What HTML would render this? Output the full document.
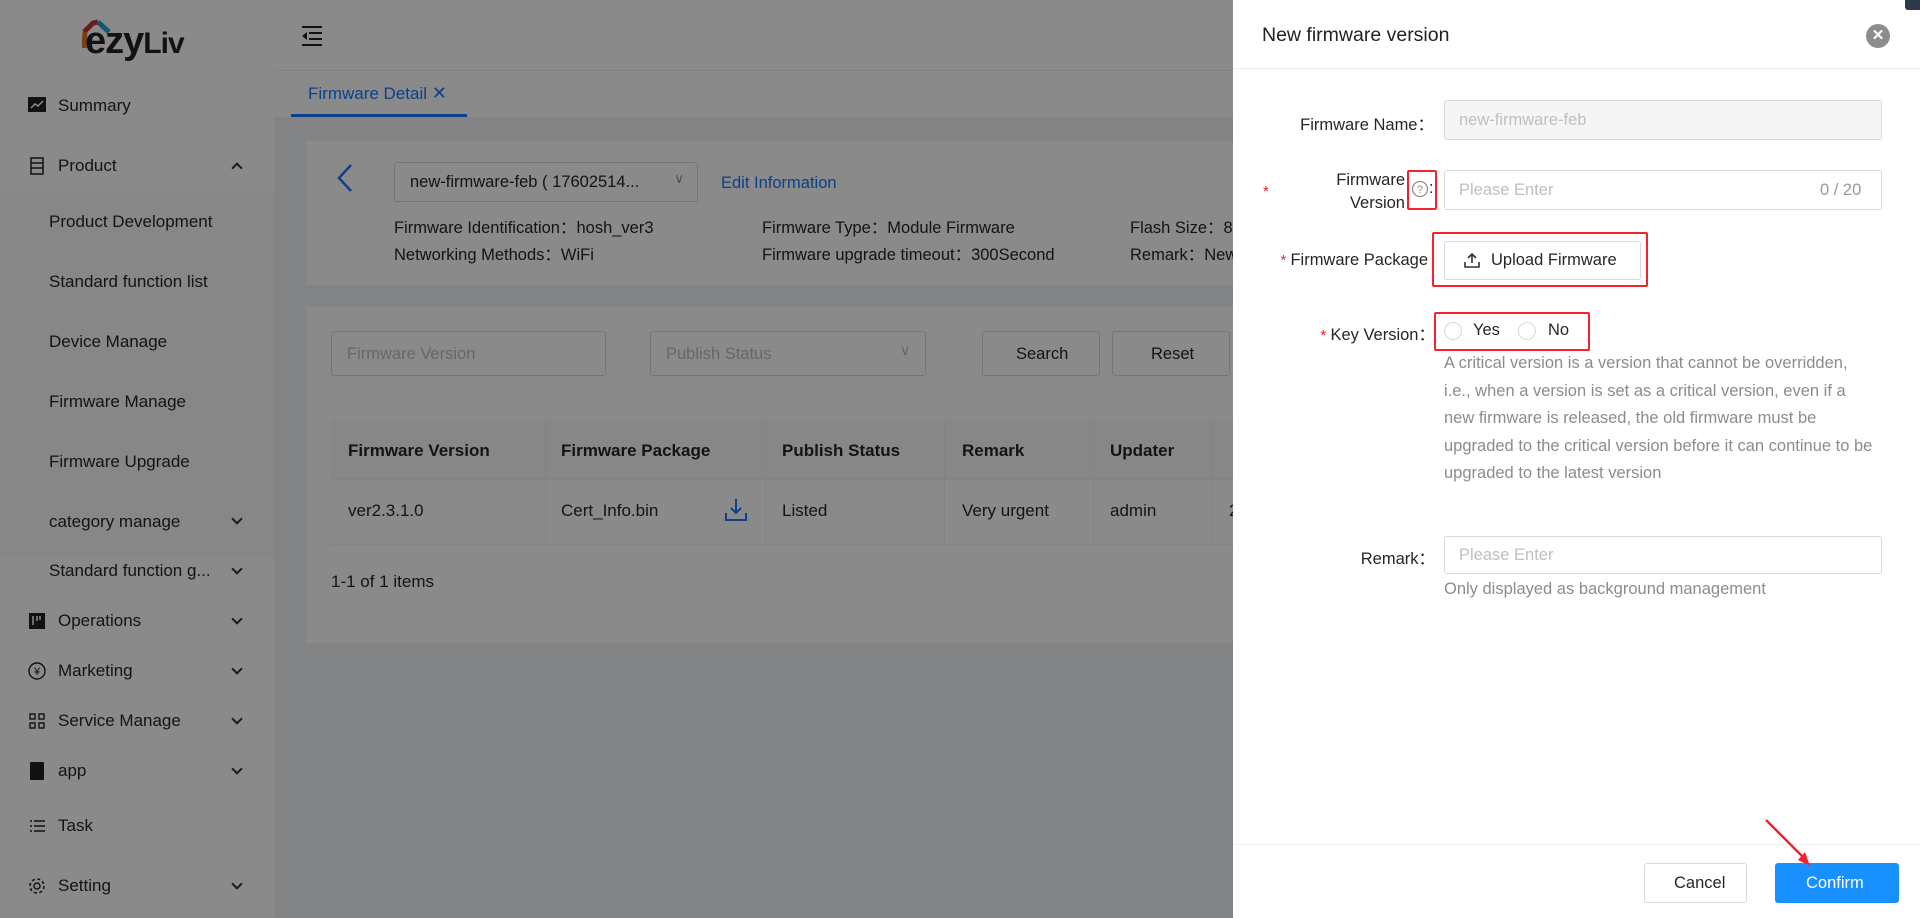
<!DOCTYPE html>
<html><head><meta charset="utf-8"><style>
*{box-sizing:border-box;margin:0;padding:0}
body{width:1920px;height:918px;overflow:hidden;position:relative;font-family:"Liberation Sans",sans-serif;background:#f0f2f5;color:#262626}
.a{position:absolute;white-space:nowrap}
.side{left:0;top:0;width:274px;height:918px;background:#fff}
.sub{left:0;top:192px;width:274px;height:366px;background:#fafafa}
.mi{font-size:17px;color:#262626}
.chev{width:8px;height:8px;border-right:2px solid #333;border-bottom:2px solid #333;transform:rotate(45deg)}
.card{background:#fff}
.inp{border:1px solid #d9d9d9;border-radius:3px;background:#fff}
.ph{color:#bfbfbf}
.th{font-weight:bold;font-size:17px}
.td{font-size:17px}
.mask{left:0;top:0;width:1233px;height:918px;background:rgba(0,0,0,.46)}
.drawer{left:1233px;top:0;width:687px;height:918px;background:#fff}
.lab{font-size:16.5px;color:#262626;text-align:right}
.red{border:2.5px solid #f5222d;border-radius:2px}
.star{color:#f5222d;font-size:15px}
.help{font-size:16.5px;color:#8c8c8c;line-height:27.5px}
</style></head><body>
<div class="a side"></div>
<div class="a sub"></div>
<!-- logo -->
<div class="a" style="left:82px;top:18px;width:110px;height:48px">
<svg width="30" height="36" style="position:absolute;left:0;top:0" viewBox="0 0 30 36"><path d="M2 14 L11 5 L16 4" stroke="#c0392b" stroke-width="5" fill="none"/><path d="M16 4 L27 14" stroke="#2e9fd8" stroke-width="5" fill="none"/><path d="M3 14 L2 30" stroke="#d9781f" stroke-width="5" fill="none"/></svg>
<span class="a" style="left:3px;top:2px;font-size:38px;font-weight:bold;color:#222;letter-spacing:-1px">ezy<span style="font-size:30px">Liv</span></span>
</div>
<!-- header -->
<div class="a" style="left:274px;top:0;width:1646px;height:70px;background:#fff"></div>
<svg class="a" style="left:301px;top:26px" width="22" height="20" viewBox="0 0 22 20"><path d="M1 1h20M8 7h13M8 13h13M1 19h20" stroke="#222" stroke-width="2"/><path d="M1 10l5-4v8z" fill="#222"/></svg>
<div class="a" style="left:274px;top:70px;width:1646px;height:47px;background:#fff;border-top:1px solid #eee"></div>
<div class="a" style="left:308px;top:83px;font-size:17px;color:#1677ff">Firmware Detail <span style="font-size:18px">✕</span></div>
<div class="a" style="left:291px;top:114px;width:176px;height:3px;background:#1677ff"></div>
<!-- menu -->
<svg class="a" style="left:28px;top:97px" width="18" height="15"><rect width="18" height="15" fill="#222"/><path d="M3 11l4-4 3 2 5-5" stroke="#fff" stroke-width="1.5" fill="none"/></svg>
<div class="a mi" style="left:58px;top:96px">Summary</div>
<svg class="a" style="left:30px;top:157px" width="14" height="18"><rect x="1" y="1" width="12" height="16" fill="none" stroke="#222" stroke-width="1.5"/><path d="M1 6h12M1 11h12" stroke="#222" stroke-width="1.5"/></svg>
<div class="a mi" style="left:58px;top:156px">Product</div>
<div class="a chev" style="left:233px;top:164px;transform:rotate(225deg)"></div>
<div class="a mi" style="left:49px;top:212px">Product Development</div>
<div class="a mi" style="left:49px;top:272px">Standard function list</div>
<div class="a mi" style="left:49px;top:332px">Device Manage</div>
<div class="a mi" style="left:49px;top:392px">Firmware Manage</div>
<div class="a mi" style="left:49px;top:452px">Firmware Upgrade</div>
<div class="a mi" style="left:49px;top:512px">category manage</div><div class="a chev" style="left:233px;top:515px"></div>
<div class="a mi" style="left:49px;top:561px">Standard function g...</div><div class="a chev" style="left:233px;top:565px"></div>
<svg class="a" style="left:29px;top:613px" width="16" height="16"><rect width="16" height="16" fill="#222"/><path d="M4 3v9M8 3v5M11 3v4" stroke="#fff" stroke-width="1.5"/></svg>
<div class="a mi" style="left:58px;top:611px">Operations</div><div class="a chev" style="left:233px;top:615px"></div>
<svg class="a" style="left:28px;top:662px" width="18" height="18"><circle cx="9" cy="9" r="8" fill="none" stroke="#222" stroke-width="1.4"/><text x="9" y="13" font-size="11" text-anchor="middle" fill="#222" font-family="Liberation Sans">¥</text></svg>
<div class="a mi" style="left:58px;top:661px">Marketing</div><div class="a chev" style="left:233px;top:665px"></div>
<svg class="a" style="left:29px;top:713px" width="16" height="16"><g fill="none" stroke="#222" stroke-width="1.4"><rect x="1" y="1" width="5" height="5"/><rect x="10" y="1" width="5" height="5"/><rect x="1" y="10" width="5" height="5"/><rect x="10" y="10" width="5" height="5"/></g></svg>
<div class="a mi" style="left:58px;top:711px">Service Manage</div><div class="a chev" style="left:233px;top:715px"></div>
<svg class="a" style="left:30px;top:762px" width="14" height="18"><rect width="14" height="18" rx="1" fill="#222"/></svg>
<div class="a mi" style="left:58px;top:761px">app</div><div class="a chev" style="left:233px;top:765px"></div>
<svg class="a" style="left:29px;top:819px" width="16" height="14"><path d="M1 2h2M1 7h2M1 12h2M5 2h11M5 7h11M5 12h11" stroke="#222" stroke-width="1.4"/></svg>
<div class="a mi" style="left:58px;top:816px">Task</div>
<svg class="a" style="left:28px;top:877px" width="18" height="18"><circle cx="9" cy="9" r="3" fill="none" stroke="#222" stroke-width="1.4"/><circle cx="9" cy="9" r="7" fill="none" stroke="#222" stroke-width="1.6" stroke-dasharray="3 2.5"/></svg>
<div class="a mi" style="left:58px;top:876px">Setting</div><div class="a chev" style="left:233px;top:880px"></div>
<!-- card1 -->
<div class="a card" style="left:306px;top:141px;width:1000px;height:144px"></div>
<svg class="a" style="left:335px;top:163px" width="20" height="30"><path d="M16 2L4 15l12 13" stroke="#1677ff" stroke-width="2.5" fill="none"/></svg>
<div class="a inp" style="left:394px;top:162px;width:304px;height:40px"></div>
<div class="a" style="left:410px;top:173px;font-size:16.5px">new-firmware-feb ( 17602514...</div>
<div class="a" style="left:674px;top:170px;font-size:14px;color:#999">∨</div>
<div class="a" style="left:721px;top:174px;font-size:16.5px;color:#1677ff">Edit Information</div>
<div class="a" style="left:394px;top:214px;font-size:16.5px">Firmware Identification：hosh_ver3</div>
<div class="a" style="left:394px;top:241px;font-size:16.5px">Networking Methods：WiFi</div>
<div class="a" style="left:762px;top:214px;font-size:16.5px">Firmware Type：Module Firmware</div>
<div class="a" style="left:762px;top:241px;font-size:16.5px">Firmware upgrade timeout：300Second</div>
<div class="a" style="left:1130px;top:214px;font-size:16.5px">Flash Size：8M</div>
<div class="a" style="left:1130px;top:241px;font-size:16.5px">Remark：New</div>
<!-- card2 -->
<div class="a card" style="left:306px;top:306px;width:1000px;height:337px"></div>
<div class="a inp" style="left:331px;top:331px;width:275px;height:45px"></div>
<div class="a ph" style="left:347px;top:345px;font-size:16.5px">Firmware Version</div>
<div class="a inp" style="left:650px;top:331px;width:276px;height:45px"></div>
<div class="a ph" style="left:666px;top:345px;font-size:16.5px">Publish Status</div>
<div class="a" style="left:900px;top:342px;font-size:14px;color:#bbb">∨</div>
<div class="a inp" style="left:982px;top:331px;width:118px;height:45px"></div>
<div class="a" style="left:1016px;top:345px;font-size:16.5px">Search</div>
<div class="a inp" style="left:1112px;top:331px;width:118px;height:45px"></div>
<div class="a" style="left:1151px;top:345px;font-size:16.5px">Reset</div>
<div class="a" style="left:331px;top:420px;width:980px;height:60px;background:#fafafa;border-bottom:1px solid #f0f0f0"></div>
<div class="a" style="left:331px;top:480px;width:980px;height:65px;border-bottom:1px solid #f0f0f0"></div>
<div class="a" style="left:545px;top:420px;width:1px;height:125px;background:#f0f0f0"></div>
<div class="a" style="left:765px;top:420px;width:1px;height:125px;background:#f0f0f0"></div>
<div class="a" style="left:944px;top:420px;width:1px;height:125px;background:#f0f0f0"></div>
<div class="a" style="left:1093px;top:420px;width:1px;height:125px;background:#f0f0f0"></div>
<div class="a" style="left:1212px;top:420px;width:1px;height:125px;background:#f0f0f0"></div>
<div class="a th" style="left:348px;top:441px">Firmware Version</div>
<div class="a th" style="left:561px;top:441px">Firmware Package</div>
<div class="a th" style="left:782px;top:441px">Publish Status</div>
<div class="a th" style="left:962px;top:441px">Remark</div>
<div class="a th" style="left:1110px;top:441px">Updater</div>
<div class="a td" style="left:348px;top:501px">ver2.3.1.0</div>
<div class="a td" style="left:561px;top:501px">Cert_Info.bin</div>
<svg class="a" style="left:725px;top:498px" width="22" height="24"><path d="M11 1v14M6 10l5 5 5-5M1 15v7h20v-7" stroke="#1677ff" stroke-width="2" fill="none"/></svg>
<div class="a td" style="left:782px;top:501px">Listed</div>
<div class="a td" style="left:962px;top:501px">Very urgent</div>
<div class="a td" style="left:1110px;top:501px">admin</div>
<div class="a td" style="left:1229px;top:501px">2</div>
<div class="a td" style="left:331px;top:572px">1-1 of 1 items</div>
<div class="a mask"></div>
<!-- drawer -->
<div class="a drawer"></div>
<div class="a" style="left:1233px;top:68px;width:687px;height:1px;background:#f0f0f0;box-shadow:0 1px 3px rgba(0,0,0,.06)"></div>
<div class="a" style="left:1262px;top:24px;font-size:19.5px;color:#222">New firmware version</div>
<div class="a" style="left:1866px;top:24px;width:24px;height:24px;border-radius:50%;background:#8c8c8c;color:#fff;font-size:15px;text-align:center;line-height:24px;font-weight:bold">✕</div>
<div class="a" style="left:1905px;top:0;width:15px;height:10px;background:#2b3a4a;border-radius:0 0 0 3px"></div>

<div class="a lab" style="left:1260px;top:111px;width:174px">Firmware Name：</div>
<div class="a inp" style="left:1444px;top:100px;width:438px;height:40px;background:#f5f5f5"></div>
<div class="a ph" style="left:1459px;top:111px;font-size:16.5px">new-firmware-feb</div>

<div class="a star" style="left:1263px;top:183px">*</div>
<div class="a lab" style="left:1300px;top:169px;width:105px;line-height:23px">Firmware<br>Version</div>
<div class="a red" style="left:1407px;top:170px;width:30px;height:40px"></div>
<svg class="a" style="left:1411px;top:180px" width="18" height="18"><circle cx="9" cy="9" r="7.5" fill="none" stroke="#8c8c8c" stroke-width="1.2"/><text x="9" y="13" font-size="11" text-anchor="middle" fill="#8c8c8c" font-family="Liberation Sans">?</text></svg>
<div class="a lab" style="left:1429px;top:179px">:</div>
<div class="a inp" style="left:1444px;top:170px;width:438px;height:40px"></div>
<div class="a ph" style="left:1459px;top:181px;font-size:16.5px">Please Enter</div>
<div class="a ph" style="left:1820px;top:181px;font-size:16.5px;color:#999">0 / 20</div>

<div class="a lab" style="left:1270px;top:251px;width:158px"><span class="star">* </span>Firmware Package</div>
<div class="a red" style="left:1432px;top:232px;width:216px;height:55px"></div>
<div class="a inp" style="left:1444px;top:241px;width:197px;height:39px"></div>
<svg class="a" style="left:1464px;top:252px" width="16" height="16"><path d="M8 2v9M4 6l4-4 4 4M1 10v5h14v-5" stroke="#333" stroke-width="1.6" fill="none"/></svg>
<div class="a" style="left:1491px;top:251px;font-size:16.5px">Upload Firmware</div>

<div class="a lab" style="left:1300px;top:321px;width:135px"><span class="star">* </span>Key Version：</div>
<div class="a red" style="left:1434px;top:312px;width:156px;height:39px"></div>
<div class="a" style="left:1444px;top:322px;width:18px;height:18px;border:1px solid #d9d9d9;border-radius:50%"></div>
<div class="a" style="left:1473px;top:321px;font-size:16.5px">Yes</div>
<div class="a" style="left:1518px;top:322px;width:18px;height:18px;border:1px solid #d9d9d9;border-radius:50%"></div>
<div class="a" style="left:1548px;top:321px;font-size:16.5px">No</div>
<div class="a help" style="left:1444px;top:350px;white-space:normal;width:434px">A critical version is a version that cannot be overridden, i.e., when a version is set as a critical version, even if a new firmware is released, the old firmware must be upgraded to the critical version before it can continue to be upgraded to the latest version</div>

<div class="a lab" style="left:1300px;top:545px;width:135px">Remark：</div>
<div class="a inp" style="left:1444px;top:536px;width:438px;height:38px"></div>
<div class="a ph" style="left:1459px;top:546px;font-size:16.5px">Please Enter</div>
<div class="a help" style="left:1444px;top:576px">Only displayed as background management</div>

<div class="a" style="left:1233px;top:844px;width:687px;height:1px;background:#f0f0f0"></div>
<div class="a inp" style="left:1644px;top:863px;width:103px;height:40px"></div>
<div class="a" style="left:1674px;top:874px;font-size:16.5px">Cancel</div>
<div class="a" style="left:1775px;top:863px;width:124px;height:40px;background:#1890ff;border-radius:3px"></div>
<div class="a" style="left:1806px;top:874px;font-size:16.5px;color:#fff">Confirm</div>
<svg class="a" style="left:1760px;top:816px" width="60" height="54"><path d="M6 4L46 44" stroke="#f5222d" stroke-width="2.5"/><path d="M38 44L50 50 45 36z" fill="#f5222d"/></svg>
</body></html>
